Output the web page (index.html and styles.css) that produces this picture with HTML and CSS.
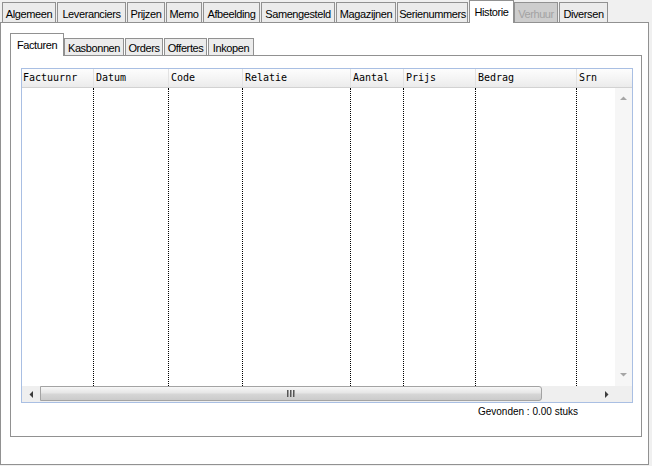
FILE: index.html
```html
<!DOCTYPE html>
<html>
<head>
<meta charset="utf-8">
<link rel="stylesheet" href="styles.css">
</head>
<body>
<div class="window">
  <div class="tabs">
    <div class="tab t1">Algemeen</div>
    <div class="tab t2">Leveranciers</div>
    <div class="tab t3">Prijzen</div>
    <div class="tab t4">Memo</div>
    <div class="tab t5">Afbeelding</div>
    <div class="tab t6">Samengesteld</div>
    <div class="tab t7">Magazijnen</div>
    <div class="tab t8">Serienummers</div>
    <div class="tab t9 active">Historie</div>
    <div class="tab t10 disabled">Verhuur</div>
    <div class="tab t11">Diversen</div>
  </div>
  <div class="panel">
    <div class="subtabs">
      <div class="subtab s1 active">Facturen</div>
      <div class="subtab s2">Kasbonnen</div>
      <div class="subtab s3">Orders</div>
      <div class="subtab s4">Offertes</div>
      <div class="subtab s5">Inkopen</div>
    </div>
    <div class="subpanel">
      <div class="grid">
        <div class="grid-head">
          <div class="hc c1">Factuurnr</div>
          <div class="hc c2">Datum</div>
          <div class="hc c3">Code</div>
          <div class="hc c4">Relatie</div>
          <div class="hc c5">Aantal</div>
          <div class="hc c6">Prijs</div>
          <div class="hc c7">Bedrag</div>
          <div class="hc c8">Srn</div>
        </div>
        <div class="grid-body">
          <div class="cols">
            <div class="bc c1"></div>
            <div class="bc c2"></div>
            <div class="bc c3"></div>
            <div class="bc c4"></div>
            <div class="bc c5"></div>
            <div class="bc c6"></div>
            <div class="bc c7"></div>
            <div class="bc c8"></div>
          </div>
          <div class="vscroll">
            <svg width="7" height="4" viewBox="0 0 7 4"><path d="M0 4L3.5 0.5L7 4Z" fill="#a6a6a6"/></svg>
            <svg width="7" height="4" viewBox="0 0 7 4"><path d="M0 0L3.5 3.5L7 0Z" fill="#a6a6a6"/></svg>
          </div>
        </div>
        <div class="hscroll">
          <div class="hbtn">
            <svg width="4" height="7" viewBox="0 0 4 7"><path d="M4 0L0.5 3.5L4 7Z" fill="#3c3c3c"/></svg>
          </div>
          <div class="thumb">
            <svg width="8" height="7" viewBox="0 0 8 7">
              <rect x="0" y="0" width="1" height="7" fill="#555"/>
              <rect x="1" y="0" width="1" height="7" fill="#9a9a9a"/>
              <rect x="3" y="0" width="1" height="7" fill="#555"/>
              <rect x="4" y="0" width="1" height="7" fill="#9a9a9a"/>
              <rect x="6" y="0" width="1" height="7" fill="#555"/>
              <rect x="7" y="0" width="1" height="7" fill="#9a9a9a"/>
            </svg>
          </div>
          <div class="htrack"></div>
          <div class="hbtn right">
            <svg width="4" height="7" viewBox="0 0 4 7"><path d="M0 0L3.5 3.5L0 7Z" fill="#3c3c3c"/></svg>
          </div>
          <div class="corner"></div>
        </div>
      </div>
      <div class="found">Gevonden : 0.00 stuks</div>
    </div>
  </div>
</div>
</body>
</html>
```
FILE: styles.css
```css
html, body {
  margin: 0;
  padding: 0;
}
body {
  width: 652px;
  height: 466px;
  background: #f0f0f0;
  font-family: "Liberation Sans", Arial, sans-serif;
  font-size: 11px;
  color: #000;
  overflow: hidden;
}
.window {
  display: flex;
  flex-direction: column;
  height: 466px;
}

/* main tabs */
.tabs {
  display: flex;
  align-items: flex-end;
  height: 22px;
  padding-left: 2px;
  flex: none;
}
.tab {
  box-sizing: border-box;
  height: 20px;
  border: 1px solid #919191;
  border-bottom: 0;
  background: #ececec;
  margin-right: 1px;
  padding-top: 5px;
  line-height: 13px;
  letter-spacing: -0.4px;
  text-align: center;
  white-space: nowrap;
}
.tab.active {
  height: 23px;
  margin-bottom: -1px;
  background: #fff;
  position: relative;
  z-index: 1;
  margin-right: 0;
}
.tab.disabled {
  background: #cdcdcd;
  color: #a3a3a3;
}
.t1 { width: 54px; }
.t2 { width: 69px; }
.t3 { width: 38px; }
.t4 { width: 36px; }
.t5 { width: 57px; }
.t6 { width: 74px; }
.t7 { width: 60px; }
.t8 { width: 71px; }
.t9 { width: 45px; }
.t10 { width: 44px; }
.t11 { width: 49px; }

.panel {
  box-sizing: border-box;
  width: 649px;
  height: 443px;
  flex: none;
  background: #fff;
  border: 1px solid #919191;
  padding: 10px 6px 27px 9px;
  display: flex;
  flex-direction: column;
}

/* sub tabs */
.subtabs {
  display: flex;
  align-items: flex-end;
  height: 22px;
  flex: none;
}
.subtab {
  box-sizing: border-box;
  height: 17px;
  border: 1px solid #919191;
  border-bottom: 0;
  background: #ececec;
  margin-right: 1px;
  padding-top: 3px;
  line-height: 13px;
  letter-spacing: -0.4px;
  text-align: center;
  white-space: nowrap;
}
.subtab.active {
  height: 23px;
  padding-top: 5px;
  margin-bottom: -1px;
  margin-right: 0;
  background: #fff;
  position: relative;
  z-index: 1;
}
.s1 { width: 54px; }
.s2 { width: 60px; }
.s3 { width: 38px; }
.s4 { width: 43px; }
.s5 { width: 46px; }

.subpanel {
  box-sizing: border-box;
  height: 382px;
  flex: none;
  border: 1px solid #919191;
  padding: 12px 8px 0 10px;
  display: flex;
  flex-direction: column;
}

/* grid */
.grid {
  box-sizing: border-box;
  height: 335px;
  flex: none;
  border: 1px solid #a9bfe3;
  display: flex;
  flex-direction: column;
  background: #fff;
}
.grid-head {
  display: flex;
  height: 18px;
  flex: none;
  border-bottom: 1px solid #d2d2d2;
  background: linear-gradient(#fdfdfd, #f3f3f3 60%, #ebebeb);
  font-family: "DejaVu Sans Mono", "Liberation Mono", monospace;
  font-size: 10px;
  line-height: 18px;
}
.hc {
  box-sizing: border-box;
  padding-left: 2px;
  border-right: 1px solid #e2e2e2;
  white-space: nowrap;
}
.hc.c1 { padding-left: 1px; }
.hc.c8 { border-right: 0; }
.c1 { width: 72px; }
.c2 { width: 75px; }
.c3 { width: 74px; }
.c4 { width: 108px; }
.c5 { width: 53px; }
.c6 { width: 72px; }
.c7 { width: 101px; }
.c8 { flex: 1; }

.grid-body {
  flex: 1;
  display: flex;
  min-height: 0;
}
.cols {
  flex: 1;
  display: flex;
}
.bc {
  box-sizing: border-box;
  border-right: 1px dotted #000;
}
.bc.c8 { border-right: 0; }
.vscroll {
  width: 17px;
  flex: none;
  background: #f6f6f6;
  display: flex;
  flex-direction: column;
  justify-content: space-between;
  align-items: center;
  padding: 8px 0 9px;
  box-sizing: border-box;
}
.vscroll svg { display: block; }

.hscroll {
  height: 16px;
  flex: none;
  display: flex;
  background: #efefef;
}
.hbtn {
  width: 18px;
  flex: none;
  display: flex;
  align-items: center;
  justify-content: center;
}
.hbtn.right { width: 17px; }
.hbtn svg { display: block; }
.thumb {
  box-sizing: border-box;
  width: 502px;
  height: 15px;
  flex: none;
  border: 1px solid #a3a3a3;
  border-radius: 0 3px 3px 0;
  background: linear-gradient(#f7f7f7, #e6e6e6 45%, #d6d6d6 55%, #cbcbcb);
  display: flex;
  align-items: center;
  justify-content: center;
}
.thumb svg { display: block; }
.htrack { flex: 1; }
.corner {
  width: 17px;
  flex: none;
  background: #efefef;
}

.found {
  margin-top: 3px;
  padding-right: 55px;
  text-align: right;
  font-size: 10px;
  line-height: 12px;
  white-space: nowrap;
}
```
